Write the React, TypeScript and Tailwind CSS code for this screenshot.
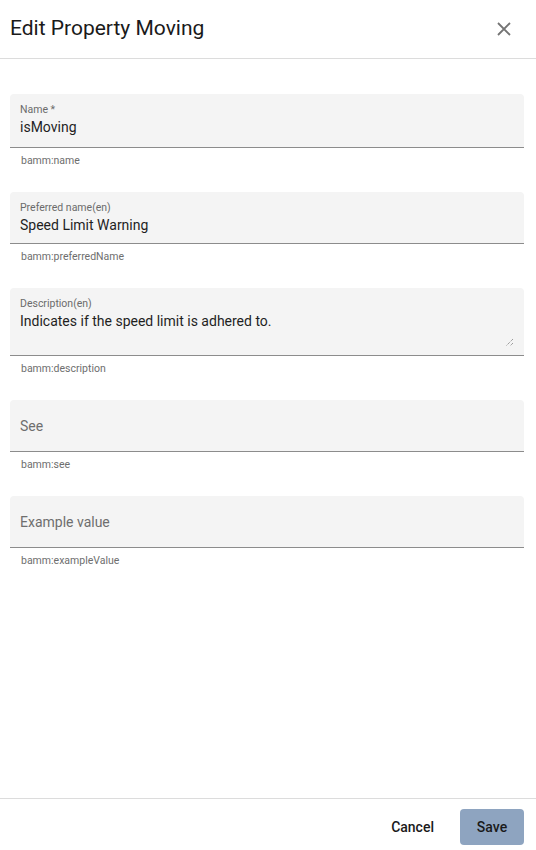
import { useState } from 'react';

interface FieldProps {
  label: string;
  value?: string;
  hint: string;
  height: string;
  multiline?: boolean;
}

function Field({ label, value, hint, height, multiline }: FieldProps) {
  const [text, setText] = useState(value ?? '');
  const filled = text.length > 0;

  return (
    <div className="flex flex-col">
      <div className={`relative bg-[#f4f4f4] rounded-t-[4px] border-b border-[#8c8c8c] px-[10px] ${height}`}>
        {filled ? (
          <>
            <div className="pt-[9px] text-[10.5px] leading-[14px] text-[#6b6b6b]">{label}</div>
            {multiline ? (
              <textarea
                value={text}
                onChange={(e) => setText(e.target.value)}
                className="block w-full h-[40px] mt-[1px] text-[14px] leading-[18px] text-[#1f1f1f] bg-transparent outline-none resize-none"
              />
            ) : (
              <input
                value={text}
                onChange={(e) => setText(e.target.value)}
                className="block w-full mt-[1px] text-[14px] leading-[18px] text-[#1f1f1f] bg-transparent outline-none"
              />
            )}
          </>
        ) : (
          <input
            placeholder={label}
            onChange={(e) => setText(e.target.value)}
            className="block w-full h-full text-[14px] text-[#1f1f1f] placeholder:text-[#6e6e6e] bg-transparent outline-none"
          />
        )}
        {multiline && (
          <svg className="absolute right-[10px] bottom-[8px] w-[9px] h-[9px]" viewBox="0 0 9 9">
            <path d="M8 1L1 8M8 5L5 8" stroke="#777" strokeWidth="1" strokeDasharray="1 1" />
          </svg>
        )}
      </div>
      <div className="h-[44px] px-[11px] pt-[6px] text-[10.5px] leading-[14px] text-[#6e6e6e]">{hint}</div>
    </div>
  );
}

export default function App() {
  return (
    <div className="h-screen w-full bg-white flex flex-col font-['Roboto',sans-serif]">
      {/* Header */}
      <div className="h-[59px] shrink-0 flex items-center justify-between pl-[10px] pr-[24px] border-b border-[#dcdcdc]">
        <h2 className="text-[21px] leading-[24px] text-[#1a1a1a] -mt-[2px]">Edit Property Moving</h2>
        <button className="text-[#747474] -mt-[1px]" title="Close">
          <svg className="w-[16px] h-[16px]" viewBox="0 0 16 16" fill="none" stroke="currentColor" strokeWidth="1.8">
            <path d="M2 2l12 12M14 2L2 14" />
          </svg>
        </button>
      </div>

      {/* Form */}
      <div className="flex-1 pl-[10px] pr-[12px] pt-[35px]">
        <Field label="Name *" value="isMoving" hint="bamm:name" height="h-[54px]" />
        <Field label="Preferred name(en)" value="Speed Limit Warning" hint="bamm:preferredName" height="h-[52px]" />
        <Field
          label="Description(en)"
          value="Indicates if the speed limit is adhered to."
          hint="bamm:description"
          height="h-[68px]"
          multiline
        />
        <Field label="See" hint="bamm:see" height="h-[52px]" />
        <Field label="Example value" hint="bamm:exampleValue" height="h-[52px]" />
      </div>

      {/* Footer */}
      <div className="h-[52px] shrink-0 border-t border-[#dcdcdc] flex items-start justify-end gap-[8px] pt-[10px] pr-[12px]">
        <button className="h-[36px] px-[18px] text-[14px] font-medium text-[#1a1a1a] rounded-[4px]">Cancel</button>
        <button className="h-[36px] w-[64px] text-[14px] font-medium text-[#1a1a1a] bg-[#8ea4c0] rounded-[4px]">Save</button>
      </div>
    </div>
  );
}
